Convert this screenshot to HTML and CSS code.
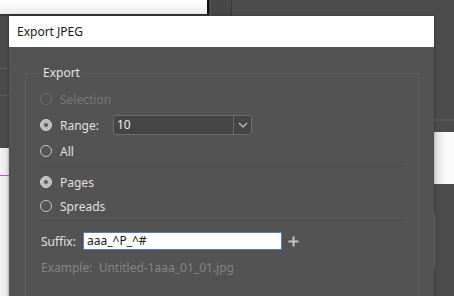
FILE: index.html
```html
<!DOCTYPE html>
<html lang="en">
<head>
    <meta charset="UTF-8">
    <meta name="viewport" content="width=device-width, initial-scale=1.0">
    <title>Export JPEG</title>
    <link rel="stylesheet" href="styles.css">
</head>
<body>
    <div class="desk">
        <!-- app behind the dialog -->
        <div class="doc-top"></div>
        <div class="panel-strip"></div>
        <div class="left-line line-a"></div>
        <div class="left-line line-b"></div>
        <div class="doc-left"><div class="guide"></div></div>
        <div class="right-line"></div>
        <div class="doc-right"></div>
        <div class="scroll-mark"></div>

        <div class="dialog">
            <div class="titlebar">Export JPEG</div>
            <div class="dialog-body">
                <fieldset class="group">
                    <legend>Export</legend>

                    <div class="row">
                        <span class="radio disabled"></span>
                        <span class="label disabled">Selection</span>
                    </div>
                    <div class="row">
                        <span class="radio checked"></span>
                        <span class="label range-label">Range:</span>
                        <div class="select">
                            <span class="select-value">10</span>
                            <span class="select-btn">
                                <svg width="10" height="6" viewBox="0 0 10 6"><path d="M1 1 L5 5 L9 1" fill="none" stroke="#c8c8c8" stroke-width="1.2"/></svg>
                            </span>
                        </div>
                    </div>
                    <div class="row">
                        <span class="radio"></span>
                        <span class="label">All</span>
                    </div>

                    <div class="sep"></div>

                    <div class="row short">
                        <span class="radio checked"></span>
                        <span class="label">Pages</span>
                    </div>
                    <div class="row short">
                        <span class="radio"></span>
                        <span class="label">Spreads</span>
                    </div>

                    <div class="sep"></div>

                    <div class="suffix-row">
                        <span class="suffix-label">Suffix:</span>
                        <div class="suffix-input">aaa_^P_^#</div>
                        <svg class="plus" width="11" height="11" viewBox="0 0 11 11"><path d="M5.5 0.5 V10.5 M0.5 5.5 H10.5" stroke="#c4c4c4" stroke-width="2"/></svg>
                    </div>
                    <div class="example">Example:&nbsp; Untitled-1aaa_01_01.jpg</div>
                </fieldset>
            </div>
        </div>
    </div>
</body>
</html>
```

FILE: styles.css
```css
body {
    margin: 0;
    font-family: "Noto Sans", "Open Sans", sans-serif;
    font-size: 12px;
}

.desk {
    position: relative;
    width: 454px;
    height: 296px;
    overflow: hidden;
    background: #4b4b4b;
}

/* background app pieces */
.doc-top {
    position: absolute;
    left: 0;
    top: 0;
    width: 207px;
    height: 14px;
    background: linear-gradient(#ffffff, #ececec);
    border-right: 2px solid #111;
    box-shadow: 0 1px 2px #222;
}

.panel-strip {
    position: absolute;
    left: 210px;
    top: 0;
    width: 20px;
    height: 16px;
    background: #474747;
    border-right: 1px solid #3a3a3a;
    border-left: 1px solid #555;
}

.left-line {
    position: absolute;
    left: 0;
    width: 9px;
    height: 1px;
    background: #5c5c5c;
}

.line-a { top: 68px; }
.line-b { top: 95px; }

.doc-left {
    position: absolute;
    left: 0;
    top: 148px;
    width: 9px;
    height: 148px;
    background: linear-gradient(90deg, #f6f6f6, #e2e2e2);
}

.guide {
    margin-top: 27px;
    height: 1px;
    background: #d04ad6;
}

.right-line {
    position: absolute;
    left: 434px;
    top: 119px;
    width: 20px;
    height: 2px;
    background: #5a5a5a;
}

.doc-right {
    position: absolute;
    left: 434px;
    top: 132px;
    width: 20px;
    height: 52px;
    background: linear-gradient(90deg, #dcdcdc, #fbfbfb 60%);
}

.scroll-mark {
    position: absolute;
    left: 434px;
    top: 214px;
    width: 1px;
    height: 54px;
    background: #6c7489;
}

/* dialog */
.dialog {
    position: absolute;
    left: 9px;
    top: 16px;
    width: 425px;
    height: 300px;
    box-shadow: 0 0 3px rgba(0, 0, 0, 0.35);
}

.titlebar {
    height: 31px;
    line-height: 31px;
    padding-left: 8px;
    background: #fff;
    color: #1a1a1a;
}

.dialog-body {
    background: #535353;
    height: 269px;
    padding: 18px 15px 0 16px;
    box-sizing: border-box;
}

.group {
    margin: 0;
    padding: 5px 14px 40px 14px;
    border: 1px solid #5e5e5e;
    color: #dedede;
}

.group legend {
    padding: 0 3px;
    margin-left: 0;
    line-height: 16px;
    color: #e4e4e4;
}

.row {
    display: flex;
    align-items: center;
    height: 26px;
}

.row.short {
    height: 24px;
}

.radio {
    width: 12px;
    height: 12px;
    border: 1px solid #c4c4c4;
    border-radius: 50%;
    box-sizing: border-box;
    flex-shrink: 0;
    position: relative;
}

.radio.disabled {
    border-color: #6f6f6f;
}

.radio.checked {
    background: #bdbdbd;
    border-color: #d2d2d2;
}

.radio.checked::after {
    content: "";
    position: absolute;
    left: 3px;
    top: 3px;
    width: 4px;
    height: 4px;
    border-radius: 50%;
    background: #5a5a5a;
}

.label {
    margin-left: 8px;
    color: #e0e0e0;
}

.label.disabled {
    color: #777;
}

.range-label {
    width: 53px;
}

.select {
    display: flex;
    width: 139px;
    height: 20px;
    box-sizing: border-box;
    border: 1px solid #6c6c6c;
    border-radius: 2px;
    background: #454545;
}

.select-value {
    flex-grow: 1;
    padding-left: 3px;
    line-height: 18px;
    color: #f0f0f0;
}

.select-btn {
    width: 17px;
    border-left: 1px solid #6c6c6c;
    display: flex;
    align-items: center;
    justify-content: center;
}

.sep {
    height: 1px;
    background: #4a4a4a;
    margin: 2px 0 3px;
}

.suffix-row {
    display: flex;
    align-items: center;
    height: 24px;
    margin-top: 8px;
}

.suffix-label {
    margin-left: 1px;
    width: 42px;
    color: #e0e0e0;
}

.suffix-input {
    width: 199px;
    height: 18px;
    box-sizing: border-box;
    border: 1px solid #4d7fc0;
    background: #fff;
    color: #1a1a1a;
    padding-left: 3px;
    line-height: 16px;
}

.plus {
    margin-left: 6px;
}

.example {
    margin: 5px 0 0 1px;
    line-height: 20px;
    color: #858585;
}
```
